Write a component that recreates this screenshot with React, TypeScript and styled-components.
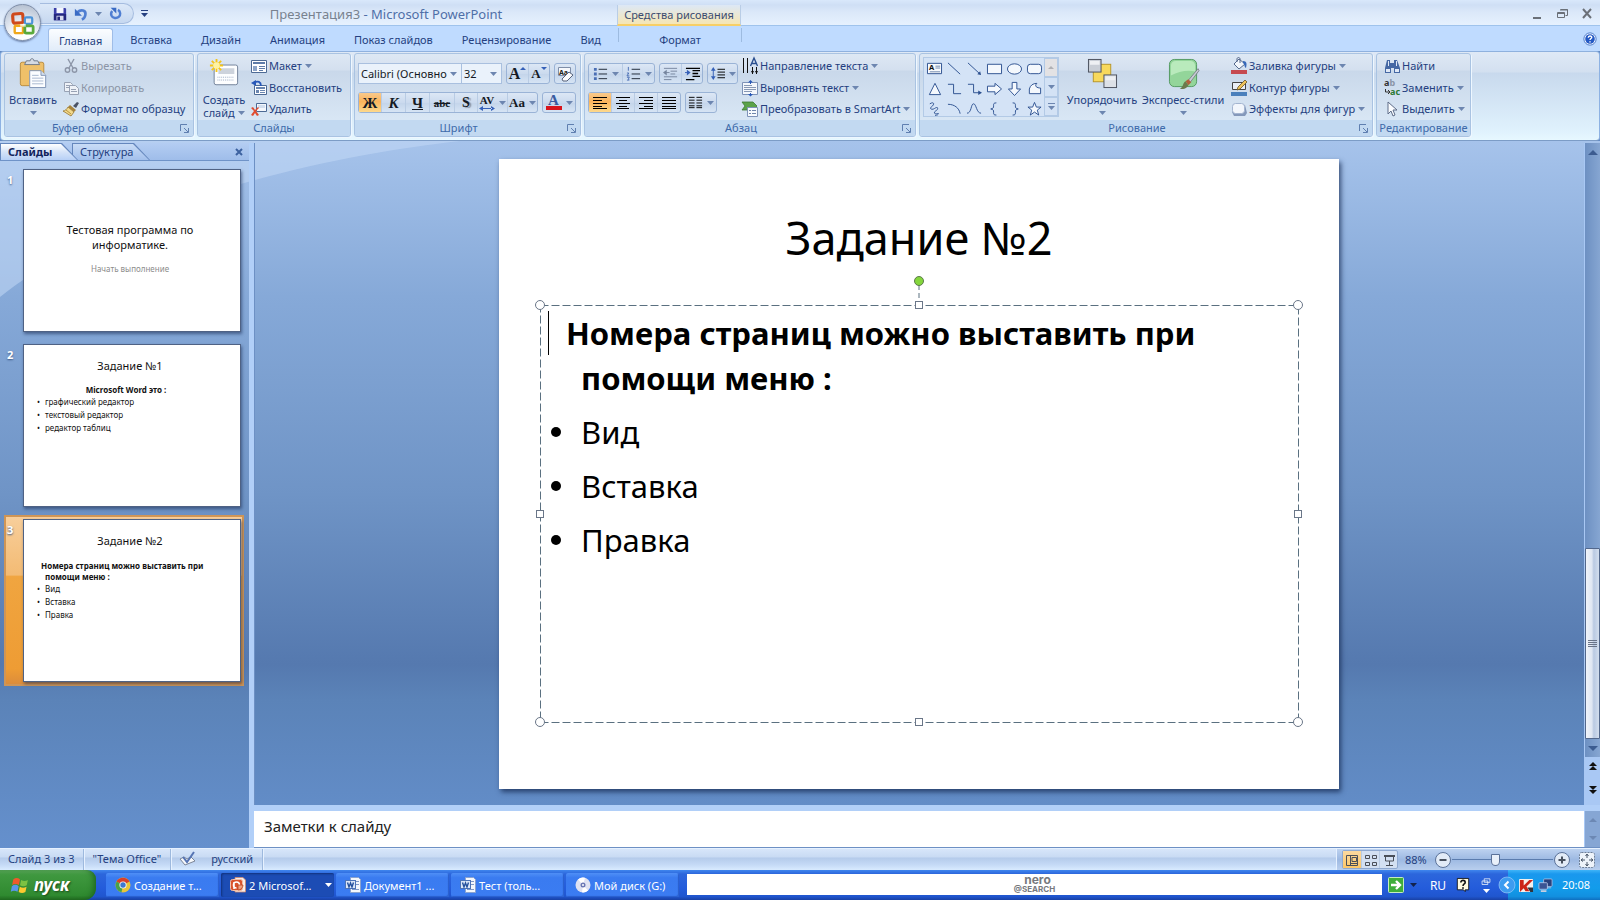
import React from 'react';
import styled, { createGlobalStyle, css } from 'styled-components';

const UI_FONT = '"Noto Sans", "Open Sans", sans-serif';
const SERIF = '"Liberation Serif", serif';

const GlobalStyle = createGlobalStyle`
  *, *::before, *::after { box-sizing: border-box; }
  body { margin: 0; background: #6289c3; font-family: ${UI_FONT}; }
  button, input, select, textarea { font-family: inherit; margin: 0; padding: 0; border: 0; background: none; color: inherit; }
  button { cursor: default; }
  ul, ol, h1, h2, p { margin: 0; padding: 0; list-style: none; font-weight: normal; }
`;

/* ---------- icons ---------- */

const Svg = styled.svg`
  display: block;
  flex: none;
  overflow: visible;
`;

const dk = '#2b4f8f';

const glyphs: Record<string, React.ReactNode> = {
  save: (
    <>
      <path d="M1 1h13l1 1v13H1z" fill="#3b3fa8" />
      <path d="M1 2v13h14V8H1z" fill="#23277e" />
      <path d="M4 1h8v6H4z" fill="#f4f6ff" />
      <path d="M4 10h8v5H4z" fill="#d8dcf0" />
      <path d="M5 11h3v4H5z" fill="#23277e" />
    </>
  ),
  undo: (
    <>
      <path d="M4 6c4-4 10-2 9 3-.4 2.600-2 4.500-4 5.500" fill="none" stroke="#4f7ed2" strokeWidth="3" />
      <path d="M1 2v8h8z" fill="#3a6bc4" />
    </>
  ),
  redo: (
    <>
      <path d="M11 3.500c3.500 2 3.500 6.500 1 8.700C9.500 14.500 4.500 14 3 10.500c-.8-2-.3-4 1-5.500" fill="none" stroke="#4f7ed2" strokeWidth="3" />
      <path d="M2 1h7v7z" fill="#3a6bc4" />
    </>
  ),
  cut: (
    <g fill="none" stroke="#8d96a8" strokeWidth="1.400">
      <path d="M5 1l5 9M11 1L6 10" />
      <circle cx="4.500" cy="12" r="2.200" />
      <circle cx="11.500" cy="12" r="2.200" />
    </g>
  ),
  copy: (
    <g fill="#eef2f8" stroke="#98a2b4">
      <path d="M1.500 2.500h6l2 2v7h-8z" />
      <path d="M3 5.500h4M3 7.500h4" />
      <path d="M6.500 5.500h6l3 3v6h-9z" />
      <path d="M8 9.500h5M8 11.500h6" />
    </g>
  ),
  brush: (
    <>
      <path d="M10 5l4-4 2 1-3 5z" fill="#4a5264" />
      <path d="M7 4l6 5-2 2-6-5z" fill="#a8843c" />
      <path d="M5 6l6 5-3 4-8-5c2 0 4-2 5-4z" fill="#f2d98c" stroke="#96742c" strokeWidth=".8" />
      <path d="M3 9l5 4" stroke="#b8923c" />
    </>
  ),
  layout: (
    <>
      <path d="M.5 2.500h15v12H.5z" fill="#fff" stroke="#4d6a94" />
      <path d="M2 4h12v2H2z" fill="#5f7ca8" />
      <path d="M2 8h4v5H2z" fill="#8ca4c8" />
      <path d="M8 8.500h6M8 10.500h6M8 12.500h4" stroke="#5f7ca8" />
    </>
  ),
  reset: (
    <>
      <path d="M3.500 5.500h12v9h-12z" fill="#fff" stroke="#4d6a94" />
      <path d="M5 7h9v2H5zM5 10h3v3H5z" fill="#6a86b0" />
      <path d="M9 10.500h5M9 12.500h5" stroke="#6a86b0" />
      <path d="M3 3c4-3 7-1 7 3" fill="none" stroke="#2858b8" strokeWidth="1.800" />
      <path d="M0 3l5-3v6z" fill="#2858b8" />
    </>
  ),
  remove: (
    <>
      <path d="M5.500 2.500h10v8h-10z" fill="#f4f7fc" stroke="#4d6a94" />
      <path d="M7 4h7v3H7z" fill="#d2deee" />
      <path d="M0 7l2-1 2 3 3-3 1 1-3 3 3 4-2 1-2-3-2 3-2-1 3-4z" fill="#e04c30" />
    </>
  ),
  paste: (
    <>
      <rect x="2.500" y="4.500" width="25" height="25" rx="2" fill="#efc069" stroke="#b98b3c" />
      <path d="M9 3h4c0-3 4-3 4 0h4l2 4H7z" fill="#d5dae2" stroke="#6e7788" />
      <path d="M12.500 13.500h12l5 5v13h-17z" fill="#fbfdff" stroke="#7d92b4" />
      <path d="M24.500 13.500v5h5" fill="#d6e0ee" stroke="#7d92b4" />
      <path d="M15 18.500h7M15 21.500h12M15 24.500h12M15 27.500h12" stroke="#a5b6ce" />
    </>
  ),
  newSlide: (
    <>
      <rect x="5.500" y="7.500" width="25" height="21" rx="2" fill="#fdfeff" stroke="#6f7f98" />
      <path d="M10 11h17v6H10z" fill="#cdd3dc" />
      <path d="M9 20.500h18M9 23.500h18" stroke="#9aaac2" strokeDasharray="1 1" />
      <path d="M8 1v14M1 8h14M3 3l10 10M13 3L3 13" stroke="#f5c518" strokeWidth="2" />
      <circle cx="8" cy="8" r="3.500" fill="#fff3a0" />
    </>
  ),
  eraser: (
    <>
      <path d="M1.500 1.500h12v8h-12z" fill="#f6f8fc" stroke="#7f8ea8" />
      <text x="2" y="8.500" fontSize="7" fontWeight="bold" fill="#222">Aa</text>
      <path d="M12 6l4 3-6 6H6l-1-2z" fill="#fbfcfe" stroke="#56627a" />
    </>
  ),
  bullets: (
    <>
      <path d="M1 2h3v3H1zM1 7h3v3H1zM1 12h3v3H1z" fill="#4a6eb4" />
      <path d="M6 3.500h9M6 8.500h9M6 13.500h9" stroke="#1b2433" />
    </>
  ),
  numbers: (
    <>
      <path d="M2.500 1v4M1 7.500h2l-2 3h2.500M1 12h2.500l-1 2 1 1H1" fill="none" stroke="#4a6eb4" />
      <path d="M6 3.500h9M6 8.500h9M6 13.500h9" stroke="#1b2433" />
    </>
  ),
  outdent: (
    <>
      <path d="M1 2.500h14M8 5.500h7M8 8.500h5M1 11.500h14M1 14.500h8" stroke="#76859e" />
      <path d="M0 7l4-3v6z" fill="#76859e" /><path d="M3 7h4" stroke="#76859e" />
    </>
  ),
  indent: (
    <>
      <path d="M1 2.500h15M8 5h8M8 8h6M8 11h8M1 14.500h9" stroke="#000" strokeWidth="1.400" />
      <path d="M6 7L2 4v6z" fill="#3560b8" /><path d="M0 7h3" stroke="#3560b8" />
    </>
  ),
  spacing: (
    <>
      <path d="M3.500 3v10" stroke="#3560b8" />
      <path d="M1 5l2.500-4L6 5zM1 11l2.500 4L6 11z" fill="#3560b8" />
      <path d="M8 3.500h8M8 6.500h8M8 9.500h8M8 12.500h8" stroke="#000" />
    </>
  ),
  left: <path d="M1 2.500h14M1 5.500h9M1 8.500h14M1 11.500h9M1 13.500h14" stroke="#000" />,
  center: <path d="M1 2.500h14M4 5.500h8M1 8.500h14M4 11.500h8M2 13.500h12" stroke="#000" />,
  right: <path d="M1 2.500h14M6 5.500h9M1 8.500h14M6 11.500h9M1 13.500h14" stroke="#000" />,
  justify: <path d="M1 2.500h14M1 5.500h14M1 8.500h14M1 11.500h14M1 13.500h14" stroke="#000" />,
  columns: <path d="M1 2.500h6M1 5.500h6M1 8.500h6M1 11.500h6M1 13.500h6M9 2.500h6M9 5.500h6M9 8.500h6M9 11.500h6M9 13.500h6" stroke="#000" />,
  direction: (
    <>
      <path d="M1.500 0v15M5.500 0v15M10.500 9v7M14.500 9v7" stroke="#111" />
      <path d="M9 13l1.500 3 1.500-3zM13 13l1.500 3 1.500-3z" fill="#111" />
      <path d="M8.500 8L12 0l3.500 8M10 5.500h4" fill="none" stroke={dk} strokeWidth="1.400" />
    </>
  ),
  alignText: (
    <>
      <path d="M.5 2.500h15v12H.5z" fill="#f4f7fc" stroke="#7e93b8" />
      <path d="M2 5.500h8M2 7.500h12M2 9.500h12M2 11.500h8" stroke="#8798b4" />
      <path d="M8.500 1v3M8.500 13v3" stroke="#2858b8" />
      <path d="M6 2.500L8.500 0 11 2.500zM6 14l2.500 2.500L11 14z" fill="#2858b8" />
    </>
  ),
  smartArt: (
    <>
      <path d="M0 1h11l4 4-4 4H0l3-4z" fill="#5ba24a" stroke="#3c7a34" strokeWidth=".8" />
      <path d="M5.500 6.500h10v9h-10z" fill="#f7fafd" stroke="#7e93b8" />
      <path d="M7 9.500h2M10 9.500h4M7 12.500h2M10 12.500h4" stroke="#6f86ac" />
    </>
  ),
  arrange: (
    <>
      <rect x="6.500" y="6.500" width="18" height="18" fill="#f8d95c" stroke="#b89628" />
      <rect x="1.500" y="1.500" width="13" height="13" fill="#c9ced6" stroke="#4c525e" />
      <rect x="17.500" y="17.500" width="13" height="13" fill="#dde1e7" stroke="#4c525e" />
      <path d="M3 3h10v4H3zM19 19h10v4H19z" fill="#eef0f3" />
    </>
  ),
  quickStyles: (
    <>
      <rect x="1.500" y="1.500" width="28" height="28" rx="5" fill="#93d59a" stroke="#549a62" />
      <path d="M3 8c0-3 2-5 5-5h15c3 0 5 2 5 5v6c-8-2-17 0-25 4z" fill="#b9eabc" />
      <path d="M31 11L21 23l2 2 9-12z" fill="#c8ccd4" stroke="#70757f" strokeWidth=".8" />
      <path d="M21 22l3 3-3 3-3-4z" fill="#b0603c" />
      <path d="M18 24l3 4c-2 4-6 4-9 4 4-2 3-6 6-8z" fill="#6b7a4c" />
    </>
  ),
  fill: (
    <>
      <path d="M3 6l5-5 6 5-6 5z" fill="#f3f6fb" stroke="#56698c" />
      <path d="M6 4V1c0-2 3-2 3 0v4" fill="none" stroke="#56698c" />
      <path d="M12 3c4 0 4 3 3 7-2-1-1-4-3-5z" fill="#3768b8" />
      <path d="M0 12h16v4H0z" fill="#c64a50" />
    </>
  ),
  outline: (
    <>
      <path d="M1.500 2.500h13v7h-13z" fill="#e9eef6" stroke="#444" />
      <path d="M14 0l2 2-7 7-3 1 1-3z" fill="#efc35a" stroke="#6a5424" strokeWidth=".8" />
      <path d="M0 12h16v4H0z" fill="#4a80bc" />
    </>
  ),
  effects: (
    <>
      <path d="M4 4h10l2 8-2 3H3l-2-4z" fill="#8498ba" />
      <rect x="1.500" y="2.500" width="12" height="10" rx="3" fill="#f2f6fc" stroke="#a3b4d0" />
    </>
  ),
  find: (
    <>
      <path d="M3 2h3v3h4V2h3l3 8v5h-6v-5H7v5H1v-5z" fill="#4668a4" />
      <path d="M2 11h4v3H2zM11 11h4v3h-4zM4 3h1v5H4zM12 3h1v5h-1z" fill="#dfe8f6" />
    </>
  ),
  replace: (
    <>
      <text x="0" y="6" fontSize="9" fontWeight="bold" fill="#333">a<tspan fill="#8a94a6">b</tspan><tspan x="6" y="15" fill="#2c7a34">ac</tspan></text>
      <path d="M1.500 9v3h4M4 10l2 2-2 2" fill="none" stroke="#333" />
    </>
  ),
  select: <path d="M4 1v12l3-3 2 5 2-1-2-5h4z" fill="#fbfdff" stroke="#5e6c88" />,
  shapeText: (
    <>
      <path d="M.5 2.500h15v11H.5z" fill="#f8fafd" stroke={dk} />
      <text x="2" y="10" fontSize="8" fontWeight="bold" fill="#111">A</text>
      <path d="M9 5.500h5M9 7.500h5M3 11.500h11" stroke="#6f86ac" />
    </>
  ),
  shapeLine: <path d="M1 2l13 12" stroke={dk} />,
  shapeArrow: <><path d="M1 2l13 12" stroke={dk} /><path d="M15 15l-4-1 3-3z" fill={dk} /></>,
  shapeRect: <path d="M.5 3.500h15v10H.5z" fill="#f4f8fd" stroke={dk} />,
  shapeOval: <ellipse cx="8" cy="8.500" rx="7.500" ry="5.500" fill="#f4f8fd" stroke={dk} />,
  shapeRound: <rect x=".5" y="3.500" width="15" height="10" rx="3" fill="#f4f8fd" stroke={dk} />,
  shapeTri: <path d="M8.500 2.500l6 12h-12z" fill="#f4f8fd" stroke={dk} />,
  shapeElbow: <path d="M1 3.500h6v10h8" fill="none" stroke={dk} />,
  shapeElbowArrow: <><path d="M1 3.500h6v9h6" fill="none" stroke={dk} /><path d="M12 10l4 2.500-4 2.500z" fill={dk} /></>,
  shapeRight: <path d="M.5 5.500h8v-3l7 6-7 6v-3h-8z" fill="#f4f8fd" stroke={dk} />,
  shapeDown: <path d="M5.500 1.500h5v7h4l-6.500 7-6.500-7h4z" fill="#f4f8fd" stroke={dk} />,
  shapeFree: <path d="M2.500 8.500c1-4 4-6 8-6-3 3 0 5 4 5v6h-12z" fill="#f4f8fd" stroke={dk} />,
  shapeScribble: <path d="M3 3c5-3 5 1 2 3s0 4 3 2 4-1 3 1-4 2-3 4 5-1 4 1-3 0-3 2" fill="none" stroke={dk} />,
  shapeArc: <path d="M1 3.500c7 0 12 4 13 10" fill="none" stroke={dk} />,
  shapeCurve: <path d="M0 13C5 13 4 3 7 3s3 10 8 10" fill="none" stroke={dk} />,
  shapeBraceL: <path d="M10 2c-3 0-3 1-3 3s0 3-3 3.500c3 .5 3 1.500 3 3.500s0 3 3 3" fill="none" stroke={dk} />,
  shapeBraceR: <path d="M6 2c3 0 3 1 3 3s0 3 3 3.500c-3 .5-3 1.500-3 3.500s0 3-3 3" fill="none" stroke={dk} />,
  shapeStar: <path d="M8 1.500l2 5h5l-4 3.200 1.500 5.300L8 11.800 3.500 15 5 9.700 1 6.500h5z" fill="#f4f8fd" stroke={dk} />,
  launcher: (
    <>
      <path d="M1.500 8V1.500H8" fill="none" stroke="#5f7fb0" />
      <path d="M5 5l4 4M9.500 5v4.500H5" fill="none" stroke="#5f7fb0" />
    </>
  ),
  minimize: <path d="M3 11h8v2H3z" fill="#6b7078" />,
  restore: <><path d="M5.500 3.500h7v6h-2M5 4h8" fill="none" stroke="#6b7078" /><path d="M2.500 6.500h7v5h-7zM2 7.500h8" fill="none" stroke="#6b7078" /></>,
  close: <path d="M3 3l8 9M11 3l-8 9" stroke="#6b7078" strokeWidth="2" />,
  paneClose: <path d="M1 1l6 6M7 1L1 7" stroke="#3d62a0" strokeWidth="2" />,
  help: (
    <>
      <circle cx="8" cy="8" r="7" fill="#fff" stroke="#3f6fc4" />
      <circle cx="8" cy="8" r="5.500" fill="#2459c4" />
      <path d="M6 6.500c0-2.500 4-2.500 4-.3 0 1.300-2 1.300-2 3" fill="none" stroke="#fff" strokeWidth="1.600" />
      <path d="M7.200 10.500h1.600V12H7.200z" fill="#fff" />
    </>
  ),
  spell: (
    <>
      <path d="M1 8l5 6 10-4-4-4-4 2-3-2z" fill="#f6f8fb" stroke="#7c8698" />
      <path d="M4 6l4 5 7-10" fill="none" stroke="#5574b4" strokeWidth="2" />
    </>
  ),
  viewNormal: <path d="M2.500 3.500h11v10h-11zM6.500 3.500v10M8 5.500h4.500v4H8zM6.500 11.500h7" fill="none" stroke="#4a4f58" />,
  viewSorter: <path d="M2.500 3.500h4v3h-4zM9.500 3.500h4v3h-4zM2.500 10.500h4v3h-4zM9.500 10.500h4v3h-4z" fill="none" stroke="#4a4f58" />,
  viewShow: <><path d="M3 3h11v2H3z" fill="#4a4f58" /><path d="M4.500 5v4h8V5M8.500 9v4M5 13.500h7" fill="none" stroke="#4a4f58" /></>,
  zoomOut: <><circle cx="8" cy="8" r="7.500" fill="#e2ebf7" stroke="#5b7299" /><path d="M4.500 7h7v2h-7z" fill="#47505e" /></>,
  zoomIn: <><circle cx="8" cy="8" r="7.500" fill="#e2ebf7" stroke="#5b7299" /><path d="M4.500 7h7v2h-7zM7 4.500h2v7H7z" fill="#47505e" /></>,
  fit: (
    <>
      <rect x=".5" y=".5" width="15" height="15" rx="2" fill="#eef3fa" stroke="#6e7f98" strokeDasharray="2 1" />
      <path d="M8 2v4M8 10v4M2 8h4M10 8h4M6.500 4L8 2l1.500 2M6.500 12L8 14l1.500-2M4 6.500L2 8l2 1.500M12 6.500L14 8l-2 1.500" fill="none" stroke="#4a5668" />
    </>
  ),
  flag: (
    <>
      <path d="M2 3c2-1.500 4-1.500 6 0L7 8C5 6.700 3 6.700 1 8z" fill="#ee5a2c" />
      <path d="M9 3.500c2 1.200 4 1.200 6 0L14 8.300c-2 1.200-4 1.200-6 0z" fill="#7cc242" />
      <path d="M.8 9c2-1.500 4-1.500 6 0L5.800 14c-2-1.300-4-1.300-6 0z" fill="#5a96ea" />
      <path d="M7.800 9.500c2 1.200 4 1.200 6 0L12.800 14.300c-2 1.200-4 1.200-6 0z" fill="#fbc930" />
    </>
  ),
  chrome: (
    <>
      <circle cx="8" cy="8" r="7.500" fill="#e8c53a" />
      <path d="M8 8L1.500 4.500a7.500 7.500 0 0 1 13 0z" fill="#d8402c" />
      <path d="M8 8L1.500 4.500a7.500 7.500 0 0 0 5 10.800z" fill="#48a04c" />
      <circle cx="8" cy="8" r="3.600" fill="#f6f8fb" />
      <circle cx="8" cy="8" r="2.700" fill="#3d78d0" />
    </>
  ),
  ppt: (
    <>
      <path d="M5 .5h8l2.500 2.500v12H5z" fill="#f8ece6" stroke="#d08a70" strokeWidth=".8" />
      <rect x=".5" y="2.500" width="12" height="11" rx="2" fill="#d9542c" stroke="#f3c0a8" />
      <path d="M9.500 8A3 3 0 1 0 6.500 11M4 12V5" fill="none" stroke="#fff" strokeWidth="1.600" />
      <path d="M8 8h5a5 5 0 0 1-5 5z" fill="#f0a080" stroke="#b84420" strokeWidth=".8" />
    </>
  ),
  word: (
    <>
      <path d="M5.500.5h8l2 2v13h-10z" fill="#f4f7fc" stroke="#8ba3cf" />
      <path d="M7 12.500h7M10 4.500h4M11 7.500h3" stroke="#7f98c6" />
      <rect x=".5" y="3.500" width="10" height="8" fill="#dce7f8" stroke="#4d74b8" />
      <path d="M2.500 5.500L4 10l1.500-4L7 10l1.500-4.500" fill="none" stroke="#24509c" strokeWidth="1.400" />
    </>
  ),
  disc: (
    <>
      <circle cx="8" cy="8" r="7.500" fill="#dfe2f2" />
      <path d="M8 8L3 2.500A7.500 7.500 0 0 1 10 .8zM8 8l5 5.500a7.500 7.500 0 0 1-6 1.800z" fill="#fff" />
      <circle cx="8" cy="8" r="2.500" fill="#6b78b4" />
      <circle cx="8" cy="8" r="1" fill="#fff" />
    </>
  ),
  go: (
    <>
      <rect x=".5" y=".5" width="15" height="15" rx="1" fill="#3fae3a" stroke="#c5ecc0" />
      <path d="M3 8h8M8 4l4 4-4 4" fill="none" stroke="#fff" strokeWidth="2.400" />
    </>
  ),
  ask: (
    <>
      <path d="M1.500.5h13v13h-4v2l-2-2h-7z" fill="#fffbe0" stroke="#111" />
      <path d="M5.500 5c0-3 5-3 5 0 0 2-2.500 1.500-2.500 4M7 11.500h2" fill="none" stroke="#111" strokeWidth="1.800" />
    </>
  ),
  kaspersky: (
    <>
      <rect x="0" y="1" width="15" height="14" rx="1" fill="#f4f0ee" />
      <path d="M1 2h4v6l6-6h4l-7 7 3 5H7L5 11l-4 4z" fill="#cc2418" />
      <path d="M9 10h6v5h-3z" fill="#30343c" />
    </>
  ),
  network: (
    <>
      <rect x="6" y="1" width="9" height="8" rx="1" fill="#28407c" stroke="#b7c6e8" strokeWidth=".8" />
      <rect x="1" y="5" width="9" height="7" rx="1" fill="#3a5494" stroke="#c5d2ee" strokeWidth=".8" />
      <path d="M3 13h6v2H3zM10 10h4v1h-4z" fill="#c5cee0" />
    </>
  ),
  chevron: <><circle cx="8" cy="8" r="8" fill="#3d9cf0" stroke="#a9d4fb" strokeWidth=".6" /><path d="M9.500 4.500L6 8l3.500 3.500" fill="none" stroke="#fff" strokeWidth="2" /></>,
  langRestore: <path d="M4.500 2.500h8v5h-8zM1.500 5.500h8v5h-8z" fill="#2b63d4" stroke="#fff" />,
  office: (
    <>
      <rect x="2" y="3" width="11" height="10" rx="2" fill="none" stroke="#cf4a1c" strokeWidth="3.400" transform="rotate(-4 7 8)" />
      <rect x="15" y="7" width="8" height="7" rx="1.500" fill="none" stroke="#4a93d8" strokeWidth="2.400" />
      <rect x="4" y="16" width="9" height="8" rx="1.500" fill="none" stroke="#f0a81c" strokeWidth="2.600" />
      <rect x="15" y="16" width="9" height="8" rx="1.500" fill="none" stroke="#5aaa3c" strokeWidth="3" />
      <path d="M10 14h6v3h-6z" fill="#fff" opacity=".7" />
    </>
  ),
};

const Icon = ({ name, size = 16, box = 16 }: { name: string; size?: number; box?: number }) => (
  <Svg width={size} height={size} viewBox={`0 0 ${box} ${box}`} aria-hidden="true">{glyphs[name]}</Svg>
);

const Caret = ({ color = '#6d86b0' }: { color?: string }) => (
  <Svg width="7" height="4" viewBox="0 0 7 4" aria-hidden="true"><path d="M0 0h7L3.500 4z" fill={color} /></Svg>
);

const UpCaret = ({ color, w = 10 }: { color: string; w?: number }) => (
  <Svg width={w} height={w / 2} viewBox="0 0 10 5" aria-hidden="true"><path d="M0 5h10L5 0z" fill={color} /></Svg>
);

const DownCaret = ({ color, w = 10 }: { color: string; w?: number }) => (
  <Svg width={w} height={w / 2} viewBox="0 0 10 5" aria-hidden="true"><path d="M0 0h10L5 5z" fill={color} /></Svg>
);

/* ---------- window frame ---------- */

const Window = styled.div`
  display: flex;
  flex-direction: column;
  height: 100vh;
  min-height: 640px;
  overflow: hidden;
  font-size: 11px;
  line-height: 16px;
  color: #243f80;
  white-space: nowrap;
`;

const Header = styled.header`
  position: relative;
  flex: none;
  background: #bfdbff;
`;

const OfficeButton = styled.button`
  position: absolute;
  left: 4px;
  top: 4px;
  width: 37px;
  height: 37px;
  display: grid;
  place-items: center;
  border: 1px solid #7f8ea8;
  border-radius: 50%;
  background: radial-gradient(circle at 50% 90%, #ffffff 0 25%, #d4dce8 60%, #aab6c8);
  box-shadow: 0 1px 2px #6478a0;
`;

const TitleBar = styled.div`
  display: flex;
  height: 26px;
  background: linear-gradient(#d9e8fb 0, #cfdff5 5px, #dbe8f9 12px, #e6f1fe 25px, #9fc3ec 25px);
`;

const QuickAccess = styled.div`
  display: flex;
  align-items: center;
  gap: 7px;
  width: 94px;
  height: 21px;
  margin: 3px 0 0 40px;
  padding-left: 13px;
  border: 1px solid #a5bcdf;
  border-left: 0;
  border-radius: 0 11px 11px 0;
  background: linear-gradient(#dce8f8, #c6d8f0);
`;

const PlainButton = styled.button`
  display: flex;
  align-items: center;
  justify-content: center;
`;

const Customize = styled(PlainButton)`
  flex-direction: column;
  gap: 2px;
  width: 21px;
  &::before { content: ''; width: 7px; height: 1px; background: #243f80; }
`;

const Title = styled.h1`
  flex: 0 1 462px;
  font-size: 13px;
  line-height: 28px;
  text-align: center;
  color: #4f6fa8;
  span { color: #78828f; }
`;

const ContextTitle = styled.div`
  width: 124px;
  margin-top: 5px;
  padding-top: 2px;
  text-align: center;
  border-bottom: 2px solid #f7cf67;
  border-left: 1px solid #b9cde6;
  border-right: 1px solid #b9cde6;
  background: linear-gradient(#dde8f6, #f6e6b4);
  color: #3c4c70;
`;

const WindowControls = styled.div`
  display: flex;
  align-items: center;
  gap: 11px;
  margin-left: auto;
  padding-right: 6px;
`;

const TabRow = styled.div`
  display: flex;
  align-items: flex-end;
  gap: 7px;
  height: 25px;
  padding-left: 48px;
`;

const Tab = styled.button<{ $active?: boolean }>`
  height: 23px;
  padding: 0 11px;
  font-size: 11px;
  line-height: 23px;
  ${p => p.$active && css`
    position: relative;
    border: 1px solid #9fbde8;
    border-bottom: 0;
    border-radius: 3px 3px 0 0;
    background: linear-gradient(#fbfdff, #e1ecf9);
    padding: 0 10px;
    margin-right: -1px;
  `}
`;

const ContextTab = styled(Tab)`
  width: 124px;
  margin-left: -1px;
  border-left: 1px solid #a7c1e4;
  border-right: 1px solid #a7c1e4;
  border-image: linear-gradient(#9dbbe0 60%, transparent 61%) 1;
`;

const HelpButton = styled(PlainButton)`
  margin: 0 3px 5px auto;
`;

/* ---------- ribbon ---------- */

const Ribbon = styled.div`
  display: flex;
  gap: 3px;
  height: 90px;
  flex: none;
  padding: 1px 3px 3px;
  border: 1px solid #8db2e3;
  border-top-color: #8fb1de;
  border-bottom: 1px solid #7c9cc6;
  border-radius: 4px;
  background: linear-gradient(#dfe9f6 0, #d3e0f0 20px, #c8d9ed 21px, #e0f2fd 80px, #e7f8ff);
`;

const GroupBox = styled.section<{ $w: number }>`
  display: flex;
  flex-direction: column;
  flex: 0 0 ${p => p.$w}px;
  border: 1px solid #a9c3e2;
  border-radius: 3px;
  box-shadow: 1px 1px 0 #eef7ff;
  background: linear-gradient(#dde8f4 0, #d4e0ef 16px, #c9d8ea 17px, #d9e7f5 68px);
  overflow: hidden;
`;

const GroupBody = styled.div`
  display: flex;
  flex: 1;
  min-height: 0;
  padding-left: 3px;
`;

const GroupLabel = styled.footer`
  position: relative;
  flex: none;
  height: 16px;
  text-align: center;
  color: #3e6aaa;
  background: #c2d9f1;
`;

const GroupName = styled.h2<{ $launcher?: boolean }>`
  font-size: 11px;
  line-height: 16px;
  padding-right: ${p => (p.$launcher ? 18 : 0)}px;
`;

const Launcher = styled.button`
  position: absolute;
  right: 4px;
  top: 3px;
`;

const Group = ({ name, w, launcher, children }: { name: string; w: number; launcher?: boolean; children: React.ReactNode }) => (
  <GroupBox $w={w} aria-label={name}>
    <GroupBody>{children}</GroupBody>
    <GroupLabel>
      <GroupName $launcher={launcher}>{name}</GroupName>
      {launcher && <Launcher aria-label={`${name}: параметры`}><Icon name="launcher" size={10} box={10} /></Launcher>}
    </GroupLabel>
  </GroupBox>
);

const BigButton = styled.button<{ $w: number }>`
  display: flex;
  flex-direction: column;
  align-items: center;
  width: ${p => p.$w}px;
  padding-top: 4px;
  font-size: 11px;
  line-height: 14px;
`;

const BigText = styled.span`
  display: flex;
  align-items: center;
  gap: 3px;
  height: 13px;
`;

const BigIcon = styled.span`
  height: 35px;
`;

const Stack = styled.div<{ $left?: number }>`
  display: flex;
  flex-direction: column;
  align-items: flex-start;
  padding-top: 1px;
  margin-left: ${p => p.$left ?? 0}px;
`;

const CommandButton = styled.button`
  display: flex;
  align-items: center;
  gap: 2px;
  height: 22px;
  font-size: 11px;
  line-height: 16px;
  &:disabled { color: #8c95a6; }
`;

const CaretPad = styled.span`
  padding-left: 1px;
`;

const Command = ({ icon, label, caret, disabled }: { icon: string; label: string; caret?: boolean; disabled?: boolean }) => (
  <CommandButton disabled={disabled}>
    <Icon name={icon} />
    {label}
    {caret && <CaretPad><Caret /></CaretPad>}
  </CommandButton>
);

const ToolRows = styled.div`
  display: flex;
  flex-direction: column;
  gap: 8px;
  padding-top: 9px;
`;

const ToolRow = styled.div`
  display: flex;
  gap: 4px;
`;

const ToolSet = styled.div`
  display: flex;
  height: 21px;
  border: 1px solid #9ab3d6;
  border-radius: 3px;
  background: linear-gradient(#dce7f5, #cbdaee 50%, #c3d4ea 51%, #d6e4f4);
`;

const ToolButton = styled.button<{ $w: number; $on?: boolean }>`
  display: flex;
  align-items: center;
  justify-content: center;
  gap: 4px;
  width: ${p => p.$w}px;
  height: 19px;
  & + & { border-left: 1px solid #b9cce4; }
  ${p => p.$on && css`background: linear-gradient(#f9c98c, #fbb45c 45%, #fdd98c);`}
`;

const Letter = styled.span<{ $size?: number; $italic?: boolean; $line?: string; $color?: string }>`
  font: ${p => (p.$italic ? 'italic' : 'normal')} bold ${p => p.$size ?? 15}px/16px ${SERIF};
  text-decoration: ${p => p.$line ?? 'none'};
  color: ${p => p.$color ?? '#151a24'};
`;

const SizeMark = styled.span`
  align-self: flex-start;
  padding-top: 3px;
  margin-left: -4px;
`;

const Shadowed = styled(Letter)`
  text-shadow: 2px 1px 1px #8a93a4;
`;

const StackedLetter = styled.span`
  display: flex;
  flex-direction: column;
  align-items: center;
`;

const ColorBar = styled.span`
  width: 16px;
  height: 4px;
  background: #d8141c;
`;

const TightLetter = styled(Letter)`
  line-height: 11px;
`;

const Combo = styled.div<{ $w: number }>`
  position: relative;
  display: flex;
  width: ${p => p.$w}px;
  height: 21px;
  border: 1px solid #a9c0df;
  background: #eaf2fb;
  & + & { margin-left: -5px; }
`;

const ComboSelect = styled.select`
  appearance: none;
  flex: 1;
  min-width: 0;
  padding-left: 2px;
  font-size: 11px;
  color: #151a24;
`;

const ComboCaret = styled.span`
  position: absolute;
  right: 4px;
  top: 8px;
  pointer-events: none;
`;

const Gallery = styled.div`
  display: flex;
  height: 60px;
  margin: 3px 6px 0 0;
  border: 1px solid #b3cae6;
`;

const GalleryGrid = styled.div`
  display: grid;
  grid-template-columns: repeat(6, 20px);
  grid-auto-rows: 20px;
  place-items: center;
  background: #d4e3f6;
`;

const GalleryScroll = styled.div`
  display: grid;
  grid-template-rows: repeat(3, 1fr);
  width: 14px;
`;

const GalleryButton = styled.button`
  display: flex;
  flex-direction: column;
  align-items: center;
  justify-content: center;
  gap: 2px;
  border: 1px solid #b3cae6;
  background: #d3e2f5;
  &:disabled { background: #e3e2e4; }
`;

const MoreBar = styled.span`
  width: 7px;
  height: 1px;
  background: #6d86b0;
`;

/* ---------- workspace ---------- */

const Workspace = styled.div`
  position: relative;
  display: flex;
  flex: 1;
  min-height: 0;
  padding-top: 2px;
  background: linear-gradient(#a6c3eb 0, #86a9d8 22%, #6f94c6 50%, #5579af 74%, #5b83b8 79%, #6590cd 100%);
`;

const Wave = styled.svg`
  position: absolute;
  left: 0;
  top: 0;
  width: 460px;
  height: 160px;
`;

const Sidebar = styled.aside`
  position: relative;
  flex: 0 0 249px;
`;

const PaneTabs = styled.div`
  display: flex;
  height: 18px;
  border-bottom: 1px solid #6f93c8;
  background: linear-gradient(#b4cdf2, #9fbdea);
`;

const PaneTab = styled.button<{ $active?: boolean; $w: number }>`
  position: relative;
  width: ${p => p.$w}px;
  padding: 0 18px 0 8px;
  text-align: left;
  font-size: 11px;
  line-height: 17px;
  font-weight: ${p => (p.$active ? 'bold' : 'normal')};
  color: ${p => (p.$active ? '#12245c' : '#243f80')};
  background: #6587bd;
  clip-path: polygon(0 0, calc(100% - 16px) 0, 100% 100%, 0 100%);
  z-index: ${p => (p.$active ? 2 : 1)};
  &::before {
    content: '';
    position: absolute;
    z-index: -1;
    inset: 1px 1px 0;
    background: ${p => (p.$active ? 'linear-gradient(#ffffff, #d5e3f8 50%, #b7d0f6)' : 'linear-gradient(#c9dcf6, #a3c0ec)')};
    clip-path: polygon(0 0, calc(100% - 16px) 0, 100% 100%, 0 100%);
  }
  & + & { margin-left: -6px; }
`;

const PaneClose = styled(PlainButton)`
  margin: 0 6px 0 auto;
`;

const SlideList = styled.ol`
  display: flex;
  flex-direction: column;
  gap: 4px;
  padding: 4px 5px 0 4px;
`;

const SlideItem = styled.li<{ $selected?: boolean }>`
  display: flex;
  height: 171px;
  padding: 4px 3px 4px 0;
  ${p => p.$selected && css`
    background: linear-gradient(#f8cf9c, #f3bb74 35%, #f0a540 36%, #ee9c34 90%, #d98a3c);
    box-shadow: inset 0 0 0 2px #cf9556;
  `}
`;

const SlideNumber = styled.span`
  flex: 0 0 19px;
  padding-left: 3px;
  line-height: 22px;
  font-weight: bold;
  color: #fff;
  text-shadow: 0 1px 2px #3b5684;
`;

const Thumb = styled.button`
  display: flex;
  flex-direction: column;
  flex: 1;
  border: 1px solid #4f6284;
  background: #fff;
  box-shadow: 1px 2px 3px rgba(30, 50, 90, .6);
  color: #111;
  text-align: left;
  font-size: 8px;
  line-height: 11px;
  white-space: normal;
`;

const ThumbTitle = styled.span<{ $cover?: boolean }>`
  padding: ${p => (p.$cover ? '52px 32px 0 28px' : '13px 4px 0 0')};
  align-self: stretch;
  text-align: center;
  font-size: 11px;
  line-height: 15px;
`;

const ThumbSub = styled.span`
  align-self: stretch;
  padding: 11px 4px 0 0;
  text-align: center;
  color: #8b8b8b;
`;

const ThumbLead = styled.span<{ $center?: boolean }>`
  font-weight: bold;
  padding: ${p => (p.$center ? '11px 12px 0 0' : '12px 12px 0 21px')};
  text-indent: ${p => (p.$center ? 0 : -4)}px;
  align-self: stretch;
  text-align: ${p => (p.$center ? 'center' : 'left')};
`;

const ThumbPoint = styled.span`
  display: flex;
  line-height: 13px;
  &::before { content: '•'; width: 8px; margin-left: 13px; }
`;

const Editor = styled.div`
  position: relative;
  display: flex;
  flex-direction: column;
  flex: 1;
  min-width: 0;
  border-left: 5px solid #b1cff8;
  box-shadow: inset 1px 0 0 #6d90c4;
`;

const CanvasRow = styled.div`
  display: flex;
  flex: 1;
  min-height: 0;
`;

const Canvas = styled.main`
  display: flex;
  justify-content: center;
  flex: 1;
  min-width: 0;
  padding: 16px 0;
`;

const Slide = styled.article`
  display: flex;
  flex-direction: column;
  height: 100%;
  aspect-ratio: 4 / 3;
  padding: 0 41px 67px;
  background: #fff;
  color: #000;
  box-shadow: 2px 3px 5px rgba(20, 40, 80, .75);
`;

const SlideTitle = styled.h2`
  flex: 0 0 146px;
  padding-top: 48px;
  font-size: 45px;
  line-height: 61px;
  text-align: center;
`;

const Placeholder = styled.div`
  position: relative;
  flex: 1;
  padding: 6px 8px;
  font-size: 31px;
  line-height: 45px;
  white-space: normal;
`;

const Lead = styled.p`
  padding-left: 33px;
  text-indent: -15px;
  font-weight: bold;
`;

const Point = styled.li`
  position: relative;
  margin-top: 9px;
  padding-left: 33px;
  &::before {
    content: '';
    position: absolute;
    left: 3px;
    top: 17px;
    width: 10px;
    height: 10px;
    border-radius: 50%;
    background: #000;
  }
`;

const TextCursor = styled.span`
  position: absolute;
  left: 8px;
  top: 6px;
  width: 1px;
  height: 44px;
  background: #000;
`;

const Outline = styled.svg`
  position: absolute;
  inset: 0;
  width: 100%;
  height: 100%;
  overflow: visible;
`;

const Handle = styled.span<{ $x: number; $y: number; $round?: boolean }>`
  position: absolute;
  left: ${p => p.$x}%;
  top: ${p => p.$y}%;
  width: ${p => (p.$round ? 10 : 8)}px;
  height: ${p => (p.$round ? 10 : 8)}px;
  margin: ${p => (p.$round ? -5 : -4)}px;
  border: 1px solid #6a7688;
  border-radius: ${p => (p.$round ? '50%' : '0')};
  background: #fff;
`;

const RotateHandle = styled.span`
  position: absolute;
  left: 50%;
  top: -29px;
  width: 10px;
  height: 10px;
  margin-left: -5px;
  border: 1px solid #5c7a4c;
  border-radius: 50%;
  background: #84d63c;
`;

const ScrollBar = styled.div`
  display: flex;
  flex-direction: column;
  flex: 0 0 16px;
  border-left: 1px solid #a9c8f4;
  background: linear-gradient(90deg, #6d90c2, #86a6d2);
`;

const ScrollButton = styled.button<{ $h: number; $light?: boolean }>`
  display: flex;
  flex-direction: column;
  align-items: center;
  justify-content: center;
  height: ${p => p.$h}px;
  background: ${p => (p.$light ? '#a9c8f4' : 'transparent')};
`;

const ScrollTrack = styled.div`
  display: flex;
  flex-direction: column;
  justify-content: flex-end;
  flex: 1;
`;

const ScrollThumb = styled.div`
  display: grid;
  place-items: center;
  height: 33%;
  border: 1px solid #53688c;
  border-radius: 1px;
  background: linear-gradient(90deg, #f0f4fa, #dfe6f2 45%, #b9c9e2 60%, #d3deee);
`;

const Notes = styled.div`
  display: flex;
  flex: 0 0 43px;
  min-height: 0;
  border-top: 6px solid #b1cff8;
  box-shadow: inset 0 1px 0 #6d90c4;
  border-bottom: 1px solid #6d90c4;
`;

const NotesInput = styled.textarea`
  flex: 1;
  min-height: 0;
  resize: none;
  padding: 5px 10px;
  font-size: 15px;
  line-height: 20px;
  background: #fff;
  color: #222;
  outline: 0;
  overflow: hidden;
  &::placeholder { color: #222; opacity: 1; }
`;

const NotesScroll = styled(ScrollBar)`
  justify-content: space-around;
  background: #86a6d4;
`;

/* ---------- status bar ---------- */

const StatusBar = styled.footer`
  display: flex;
  align-items: stretch;
  flex: 0 0 22px;
  line-height: 20px;
  border-top: 1px solid #e6f1ff;
  background: linear-gradient(#d7e6fa 0, #c8daf3 40%, #b3caea 41%, #c5daf6 75%, #d9ebff 100%);
`;

const StatusCell = styled.div`
  display: flex;
  gap: 16px;
  padding: 0 9px 0 8px;
  border-right: 1px solid #9db9de;
  box-shadow: 1px 0 0 #e6f1ff;
  svg { margin-top: 2px; }
`;

const StatusTools = styled.div`
  display: flex;
  align-items: center;
  margin-left: auto;
  padding: 0 5px;
  border-left: 1px solid #e6f1ff;
  background: linear-gradient(#bdd2f0, #9db9e2 50%, #b9cfee);
`;

const ViewSet = styled.div`
  display: flex;
  margin-right: 7px;
  border: 1px solid #8fa9d0;
  border-radius: 2px;
  background: #d3e0f2;
`;

const ViewButton = styled.button<{ $on?: boolean }>`
  width: 18px;
  height: 17px;
  padding-left: 1px;
  & + & { border-left: 1px solid #b9cce4; }
  ${p => p.$on && css`background: linear-gradient(#fbd9a0, #fdc768);`}
`;

const ZoomSlider = styled.input`
  appearance: none;
  width: 101px;
  height: 16px;
  margin: 0 1px;
  background: linear-gradient(#5b7cae, #5b7cae) center / 100% 1px no-repeat;
  &::-webkit-slider-thumb {
    appearance: none;
    width: 9px;
    height: 12px;
    border: 1px solid #5b7299;
    border-radius: 1px 1px 5px 5px;
    background: #e9f0fa;
  }
`;

const ZoomValue = styled.button`
  width: 30px;
  font-size: 11px;
  text-align: left;
`;

const FitButton = styled(PlainButton)`
  margin-left: 9px;
`;

/* ---------- taskbar ---------- */

const Taskbar = styled.nav`
  display: flex;
  align-items: stretch;
  flex: 0 0 30px;
  color: #fff;
  background: linear-gradient(#3f86ee 0, #2c66dc 4px, #245cdb 60%, #2056cf 88%, #1941a5);
`;

const StartButton = styled.button`
  display: flex;
  align-items: center;
  gap: 5px;
  width: 96px;
  padding-left: 11px;
  border-radius: 0 9px 12px 0;
  font-size: 17px;
  font-style: italic;
  font-weight: bold;
  line-height: 28px;
  background: linear-gradient(#58a558 0, #3f983f 5px, #358f35 60%, #2f8a30 85%, #20681f);
  box-shadow: inset -5px 0 6px -3px #1c6420;
  text-shadow: 1px 1px 2px #1c4a1c;
`;

const Tasks = styled.div`
  display: flex;
  gap: 2px;
  padding: 3px 0 0 10px;
`;

const Task = styled.button<{ $active?: boolean }>`
  display: flex;
  align-items: center;
  gap: 3px;
  width: 113px;
  height: 24px;
  padding: 0 2px 0 9px;
  border-radius: 2px;
  font-size: 11px;
  background: ${p => (p.$active ? '#1c4cb4' : 'linear-gradient(#4f8ff6, #3a7bf0 20%, #3b7cf2)')};
  box-shadow: ${p => (p.$active ? 'inset 1px 1px 2px #12327c' : 'inset -1px -1px 1px #2a5fcc')};
`;

const TaskCaret = styled.span`
  margin-left: auto;
`;

const SearchBox = styled.label`
  display: grid;
  flex: 1;
  margin: 4px 6px 5px 8px;
  background: #fff;
  > * { grid-area: 1 / 1; }
`;

const SearchInput = styled.input`
  width: 100%;
  outline: 0;
`;

const SearchLogo = styled.span`
  justify-self: center;
  display: flex;
  flex-direction: column;
  align-items: center;
  font: bold 8px/8px "Inter", sans-serif;
  color: #77797e;
  pointer-events: none;
  b { font: bold 12px/11px "Inter", sans-serif; padding-left: 6px; }
`;

const TrayTools = styled.div`
  display: flex;
  align-items: center;
  gap: 6px;
`;

const Language = styled.button`
  width: 24px;
  font-size: 12px;
  margin-left: 3px;
`;

const LangStack = styled.span`
  display: flex;
  flex-direction: column;
  align-items: center;
  gap: 2px;
  width: 20px;
`;

const Tray = styled.div`
  display: flex;
  align-items: center;
  gap: 4px;
  width: 92px;
  margin-left: 12px;
  background: linear-gradient(#3fb4f8 0, #1a98ee 4px, #129ceb 60%, #1290e0 88%, #0f6fc0);
  svg:first-child { margin-left: -9px; }
`;

const Clock = styled.time`
  margin-left: 5px;
  font-size: 11px;
`;

const shapes = [
  'shapeText', 'shapeLine', 'shapeArrow', 'shapeRect', 'shapeOval', 'shapeRound',
  'shapeTri', 'shapeElbow', 'shapeElbowArrow', 'shapeRight', 'shapeDown', 'shapeFree',
  'shapeScribble', 'shapeArc', 'shapeCurve', 'shapeBraceL', 'shapeBraceR', 'shapeStar',
];

const tabs = ['Главная', 'Вставка', 'Дизайн', 'Анимация', 'Показ слайдов', 'Рецензирование', 'Вид'];

const TopBars = () => (
  <Header>
    <TitleBar>
      <QuickAccess>
        <PlainButton aria-label="Сохранить"><Icon name="save" size={14} /></PlainButton>
        <PlainButton aria-label="Отменить"><Icon name="undo" size={14} /></PlainButton>
        <PlainButton aria-label="Список отмены"><Caret /></PlainButton>
        <PlainButton aria-label="Повторить"><Icon name="redo" size={13} /></PlainButton>
      </QuickAccess>
      <Customize aria-label="Настройка панели"><Caret color="#243f80" /></Customize>
      <Title><span>Презентация3</span> - Microsoft PowerPoint</Title>
      <ContextTitle>Средства рисования</ContextTitle>
      <WindowControls>
        <PlainButton aria-label="Свернуть"><Icon name="minimize" size={14} box={14} /></PlainButton>
        <PlainButton aria-label="Восстановить"><Icon name="restore" size={14} box={14} /></PlainButton>
        <PlainButton aria-label="Закрыть"><Icon name="close" size={14} box={14} /></PlainButton>
      </WindowControls>
    </TitleBar>
    <TabRow role="tablist">
      {tabs.map((t, i) => <Tab key={t} role="tab" aria-selected={i === 0} $active={i === 0}>{t}</Tab>)}
      <ContextTab role="tab">Формат</ContextTab>
      <HelpButton aria-label="Справка"><Icon name="help" size={14} /></HelpButton>
    </TabRow>
    <OfficeButton aria-label="Office"><Icon name="office" size={24} box={26} /></OfficeButton>
  </Header>
);

const RibbonBar = () => (
  <Ribbon>
    <Group name="Буфер обмена" w={190} launcher>
      <BigButton $w={50}>
        <BigIcon><Icon name="paste" size={30} box={32} /></BigIcon>
        <BigText>Вставить</BigText>
        <BigText><Caret /></BigText>
      </BigButton>
      <Stack $left={5}>
        <Command icon="cut" label="Вырезать" disabled />
        <Command icon="copy" label="Копировать" disabled />
        <Command icon="brush" label="Формат по образцу" />
      </Stack>
    </Group>
    <Group name="Слайды" w={154}>
      <BigButton $w={46}>
        <BigIcon><Icon name="newSlide" size={30} box={32} /></BigIcon>
        <BigText>Создать</BigText>
        <BigText>слайд<Caret /></BigText>
      </BigButton>
      <Stack $left={4}>
        <Command icon="layout" label="Макет" caret />
        <Command icon="reset" label="Восстановить" />
        <Command icon="remove" label="Удалить" />
      </Stack>
    </Group>
    <Group name="Шрифт" w={227} launcher>
      <ToolRows>
        <ToolRow>
          <Combo $w={104}>
            <ComboSelect aria-label="Шрифт"><option>Calibri (Основно</option></ComboSelect>
            <ComboCaret><Caret /></ComboCaret>
          </Combo>
          <Combo $w={41}>
            <ComboSelect aria-label="Размер шрифта"><option>32</option></ComboSelect>
            <ComboCaret><Caret /></ComboCaret>
          </Combo>
          <ToolSet>
            <ToolButton $w={21} aria-label="Увеличить размер"><Letter $size={16}>A</Letter><SizeMark><UpCaret w={6} color="#3560b8" /></SizeMark></ToolButton>
            <ToolButton $w={21} aria-label="Уменьшить размер"><Letter $size={13}>A</Letter><SizeMark><DownCaret w={6} color="#3560b8" /></SizeMark></ToolButton>
          </ToolSet>
          <ToolSet><ToolButton $w={20} aria-label="Очистить формат"><Icon name="eraser" /></ToolButton></ToolSet>
        </ToolRow>
        <ToolRow>
          <ToolSet>
            <ToolButton $w={22} $on aria-pressed="true"><Letter>Ж</Letter></ToolButton>
            <ToolButton $w={24}><Letter $italic>К</Letter></ToolButton>
            <ToolButton $w={24}><Letter $line="underline">Ч</Letter></ToolButton>
            <ToolButton $w={25}><Letter $size={11} $line="line-through">abc</Letter></ToolButton>
            <ToolButton $w={23}><Shadowed $size={14}>S</Shadowed></ToolButton>
            <ToolButton $w={30} aria-label="Интервал">
              <StackedLetter>
                <TightLetter $size={11}>AV</TightLetter>
                <Svg width="16" height="5" viewBox="0 0 16 5"><path d="M0 2.500L4 0v5zM16 2.500L12 0v5zM3 2h10v1H3z" fill="#3560b8" /></Svg>
              </StackedLetter>
              <Caret />
            </ToolButton>
            <ToolButton $w={30} aria-label="Регистр"><Letter $size={13}>Aa</Letter><Caret /></ToolButton>
          </ToolSet>
          <ToolSet>
            <ToolButton $w={32} aria-label="Цвет текста">
              <StackedLetter><TightLetter $color="#3a5ca0">A</TightLetter><ColorBar /></StackedLetter>
              <Caret />
            </ToolButton>
          </ToolSet>
        </ToolRow>
      </ToolRows>
    </Group>
    <Group name="Абзац" w={332} launcher>
      <ToolRows>
        <ToolRow>
          <ToolSet>
            <ToolButton $w={33} aria-label="Маркеры"><Icon name="bullets" size={15} /><Caret /></ToolButton>
            <ToolButton $w={32} aria-label="Нумерация"><Icon name="numbers" size={15} /><Caret /></ToolButton>
          </ToolSet>
          <ToolSet>
            <ToolButton $w={21} aria-label="Уменьшить отступ"><Icon name="outdent" size={15} /></ToolButton>
            <ToolButton $w={21} aria-label="Увеличить отступ"><Icon name="indent" size={15} /></ToolButton>
          </ToolSet>
          <ToolSet><ToolButton $w={29} aria-label="Междустрочный интервал"><Icon name="spacing" size={15} /><Caret /></ToolButton></ToolSet>
        </ToolRow>
        <ToolRow>
          <ToolSet>
            <ToolButton $w={22} $on aria-label="По левому краю"><Icon name="left" /></ToolButton>
            <ToolButton $w={23} aria-label="По центру"><Icon name="center" /></ToolButton>
            <ToolButton $w={23} aria-label="По правому краю"><Icon name="right" /></ToolButton>
            <ToolButton $w={23} aria-label="По ширине"><Icon name="justify" /></ToolButton>
          </ToolSet>
          <ToolSet><ToolButton $w={30} aria-label="Колонки"><Icon name="columns" size={15} /><Caret /></ToolButton></ToolSet>
        </ToolRow>
      </ToolRows>
      <Stack $left={4}>
        <Command icon="direction" label="Направление текста" caret />
        <Command icon="alignText" label="Выровнять текст" caret />
        <Command icon="smartArt" label="Преобразовать в SmartArt" caret />
      </Stack>
    </Group>
    <Group name="Рисование" w={454} launcher>
      <Gallery>
        <GalleryGrid>
          {shapes.map(s => <PlainButton key={s} aria-label={s}><Icon name={s} size={15} /></PlainButton>)}
        </GalleryGrid>
        <GalleryScroll>
          <GalleryButton disabled aria-label="Вверх"><UpCaret w={6} color="#b0b0b4" /></GalleryButton>
          <GalleryButton aria-label="Вниз"><Caret /></GalleryButton>
          <GalleryButton aria-label="Дополнительно"><MoreBar /><Caret /></GalleryButton>
        </GalleryScroll>
      </Gallery>
      <BigButton $w={74}>
        <BigIcon><Icon name="arrange" size={31} box={32} /></BigIcon>
        <BigText>Упорядочить</BigText>
        <BigText><Caret /></BigText>
      </BigButton>
      <BigButton $w={88}>
        <BigIcon><Icon name="quickStyles" size={31} box={32} /></BigIcon>
        <BigText>Экспресс-стили</BigText>
        <BigText><Caret /></BigText>
      </BigButton>
      <Stack $left={4}>
        <Command icon="fill" label="Заливка фигуры" caret />
        <Command icon="outline" label="Контур фигуры" caret />
        <Command icon="effects" label="Эффекты для фигур" caret />
      </Stack>
    </Group>
    <Group name="Редактирование" w={95}>
      <Stack $left={4}>
        <Command icon="find" label="Найти" />
        <Command icon="replace" label="Заменить" caret />
        <Command icon="select" label="Выделить" caret />
      </Stack>
    </Group>
  </Ribbon>
);

const SlidesPane = () => (
  <Sidebar>
    <PaneTabs role="tablist">
      <PaneTab role="tab" aria-selected="true" $active $w={78}>Слайды</PaneTab>
      <PaneTab role="tab" $w={78}>Структура</PaneTab>
      <PaneClose aria-label="Закрыть панель"><Icon name="paneClose" size={8} box={8} /></PaneClose>
    </PaneTabs>
    <SlideList>
      <SlideItem>
        <SlideNumber>1</SlideNumber>
        <Thumb>
          <ThumbTitle $cover>Тестовая программа по информатике.</ThumbTitle>
          <ThumbSub>Начать выполнение</ThumbSub>
        </Thumb>
      </SlideItem>
      <SlideItem>
        <SlideNumber>2</SlideNumber>
        <Thumb>
          <ThumbTitle>Задание №1</ThumbTitle>
          <ThumbLead $center>Microsoft Word это :</ThumbLead>
          <ThumbPoint>графический редактор</ThumbPoint>
          <ThumbPoint>текстовый редактор</ThumbPoint>
          <ThumbPoint>редактор таблиц</ThumbPoint>
        </Thumb>
      </SlideItem>
      <SlideItem $selected aria-current="true">
        <SlideNumber>3</SlideNumber>
        <Thumb>
          <ThumbTitle>Задание №2</ThumbTitle>
          <ThumbLead>Номера страниц можно выставить при помощи меню :</ThumbLead>
          <ThumbPoint>Вид</ThumbPoint>
          <ThumbPoint>Вставка</ThumbPoint>
          <ThumbPoint>Правка</ThumbPoint>
        </Thumb>
      </SlideItem>
    </SlideList>
  </Sidebar>
);

const SlideEditor = () => (
  <Editor>
    <CanvasRow>
      <Canvas>
        <Slide>
          <SlideTitle>Задание №2</SlideTitle>
          <Placeholder>
            <Lead>Номера страниц можно выставить при помощи меню :</Lead>
            <ul>
              <Point>Вид</Point>
              <Point>Вставка</Point>
              <Point>Правка</Point>
            </ul>
            <Outline>
              <rect x="0.5" y="0.5" width="100%" height="100%" fill="none" stroke="#5a7080" strokeDasharray="8 3" />
              <line x1="50%" x2="50%" y1="-20" y2="0" stroke="#5a7080" strokeDasharray="5 3" />
            </Outline>
            <Handle $x={0} $y={0} $round /><Handle $x={100} $y={0} $round />
            <Handle $x={0} $y={100} $round /><Handle $x={100} $y={100} $round />
            <Handle $x={50} $y={0} /><Handle $x={50} $y={100} />
            <Handle $x={0} $y={50} /><Handle $x={100} $y={50} />
            <RotateHandle />
            <TextCursor />
          </Placeholder>
        </Slide>
      </Canvas>
      <ScrollBar>
        <ScrollButton $h={18} aria-label="Прокрутить вверх"><UpCaret color="#3c5c90" /></ScrollButton>
        <ScrollTrack>
          <ScrollThumb><Svg width="9" height="8" viewBox="0 0 9 8"><path d="M0 .5h9M0 2.500h9M0 4.500h9M0 6.500h9" stroke="#6a7488" /></Svg></ScrollThumb>
        </ScrollTrack>
        <ScrollButton $h={18} aria-label="Прокрутить вниз"><DownCaret color="#3c5c90" /></ScrollButton>
        <ScrollButton $h={18} $light aria-label="Предыдущий слайд"><UpCaret w={8} color="#111" /><UpCaret w={8} color="#111" /></ScrollButton>
        <ScrollButton $h={30} $light aria-label="Следующий слайд"><DownCaret w={8} color="#111" /><DownCaret w={8} color="#111" /></ScrollButton>
      </ScrollBar>
    </CanvasRow>
    <Notes>
      <NotesInput rows={1} aria-label="Заметки" placeholder="Заметки к слайду" />
      <NotesScroll>
        <ScrollButton $h={16} aria-label="Вверх"><UpCaret w={8} color="#6c88b4" /></ScrollButton>
        <ScrollButton $h={16} aria-label="Вниз"><DownCaret w={8} color="#6c88b4" /></ScrollButton>
      </NotesScroll>
    </Notes>
  </Editor>
);

export default function App() {
  return (
    <Window>
      <GlobalStyle />
      <TopBars />
      <RibbonBar />
      <Workspace>
        <Wave viewBox="0 0 460 160" preserveAspectRatio="none" aria-hidden="true">
          <path d="M0 0H460C330 14 120 60 0 156z" fill="#c3d9f5" opacity=".55" />
        </Wave>
        <SlidesPane />
        <SlideEditor />
      </Workspace>
      <StatusBar>
        <StatusCell>Слайд 3 из 3</StatusCell>
        <StatusCell>"Тема Office"</StatusCell>
        <StatusCell><Icon name="spell" />русский</StatusCell>
        <StatusTools>
          <ViewSet>
            <ViewButton $on aria-label="Обычный"><Icon name="viewNormal" /></ViewButton>
            <ViewButton aria-label="Сортировщик слайдов"><Icon name="viewSorter" /></ViewButton>
            <ViewButton aria-label="Показ слайдов"><Icon name="viewShow" /></ViewButton>
          </ViewSet>
          <ZoomValue>88%</ZoomValue>
          <PlainButton aria-label="Уменьшить"><Icon name="zoomOut" /></PlainButton>
          <ZoomSlider type="range" min={0} max={100} defaultValue={42} aria-label="Масштаб" />
          <PlainButton aria-label="Увеличить"><Icon name="zoomIn" /></PlainButton>
          <FitButton aria-label="Вписать в окно"><Icon name="fit" /></FitButton>
        </StatusTools>
      </StatusBar>
      <Taskbar>
        <StartButton><Icon name="flag" size={18} />пуск</StartButton>
        <Tasks>
          <Task><Icon name="chrome" />Создание т...</Task>
          <Task $active><Icon name="ppt" />2 Microsof...<TaskCaret><Caret color="#fff" /></TaskCaret></Task>
          <Task><Icon name="word" />Документ1 ...</Task>
          <Task><Icon name="word" />Тест (толь...</Task>
          <Task><Icon name="disc" />Мой диск (G:)</Task>
        </Tasks>
        <SearchBox>
          <SearchInput type="text" aria-label="Поиск" />
          <SearchLogo><b>nero</b>@SEARCH</SearchLogo>
        </SearchBox>
        <TrayTools>
          <PlainButton aria-label="Найти"><Icon name="go" /></PlainButton>
          <Caret color="#12224c" />
          <Language>RU</Language>
          <Icon name="ask" size={14} />
          <LangStack><Icon name="langRestore" size={10} box={14} /><Caret color="#fff" /></LangStack>
        </TrayTools>
        <Tray>
          <Icon name="chevron" />
          <Icon name="kaspersky" size={15} />
          <Icon name="network" size={15} />
          <Clock>20:08</Clock>
        </Tray>
      </Taskbar>
    </Window>
  );
}
